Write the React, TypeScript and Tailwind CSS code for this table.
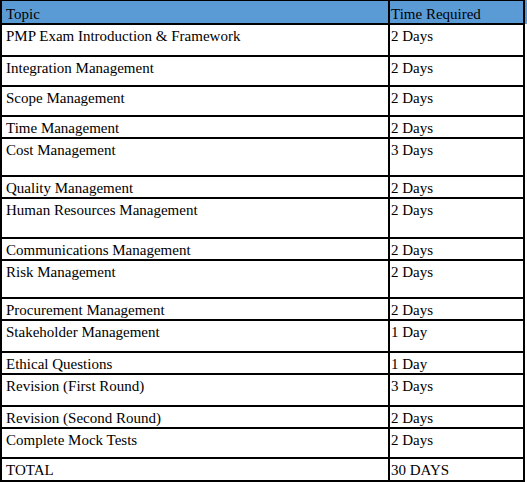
const rows: { topic: string; time: string; h: string }[] = [
  { topic: "PMP Exam Introduction & Framework", time: "2 Days", h: "h-[32px]" },
  { topic: "Integration Management", time: "2 Days", h: "h-[30px]" },
  { topic: "Scope Management", time: "2 Days", h: "h-[30px]" },
  { topic: "Time Management", time: "2 Days", h: "h-[22px]" },
  { topic: "Cost Management", time: "3 Days", h: "h-[38px]" },
  { topic: "Quality Management", time: "2 Days", h: "h-[22px]" },
  { topic: "Human Resources Management", time: "2 Days", h: "h-[40px]" },
  { topic: "Communications Management", time: "2 Days", h: "h-[22px]" },
  { topic: "Risk Management", time: "2 Days", h: "h-[38px]" },
  { topic: "Procurement Management", time: "2 Days", h: "h-[22px]" },
  { topic: "Stakeholder Management", time: "1 Day", h: "h-[32px]" },
  { topic: "Ethical Questions", time: "1 Day", h: "h-[22px]" },
  { topic: "Revision (First Round)", time: "3 Days", h: "h-[32px]" },
  { topic: "Revision (Second Round)", time: "2 Days", h: "h-[22px]" },
  { topic: "Complete Mock Tests", time: "2 Days", h: "h-[30px]" },
];

function Row({ topic, time, h }: { topic: string; time: string; h: string }) {
  return (
    <div className={`flex border-b-2 border-black ${h}`}>
      <div className="w-[388px] shrink-0 border-r-2 border-black pl-[4px] pt-[3px]">{topic}</div>
      <div className="flex-1 pl-[1px] pt-[3px]">{time}</div>
    </div>
  );
}

export default function App() {
  return (
    <div className="flex items-start bg-white font-['Liberation_Serif','Times_New_Roman',serif] text-[15px] leading-[17px] text-black">
      <div className="w-[525px] shrink-0 border-x-2 border-t border-b-2 border-black">
        <div className="flex h-[24px] border-b-2 border-black bg-[#5b9bd5]">
          <div className="w-[388px] shrink-0 border-r-2 border-black pl-[4px] pt-[5px]">Topic</div>
          <div className="flex-1 pl-[1px] pt-[5px]">Time Required</div>
        </div>
        {rows.map((r) => (
          <Row key={r.topic} {...r} />
        ))}
        <div className="flex h-[21px]">
          <div className="w-[388px] shrink-0 border-r-2 border-black pl-[4px] pt-[3px]">TOTAL</div>
          <div className="flex-1 pl-[1px] pt-[3px]">30 DAYS</div>
        </div>
      </div>
      <div className="h-[24px] w-[2px] bg-[#5b9bd5]" />
    </div>
  );
}
